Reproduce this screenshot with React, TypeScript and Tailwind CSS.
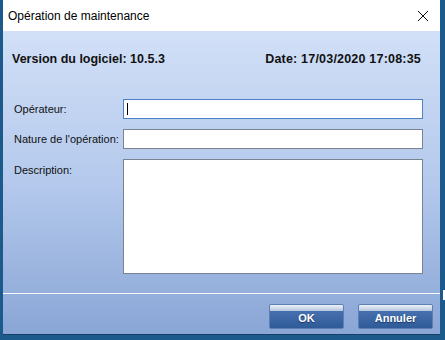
export default function App() {
  return (
    <div className="relative h-[340px] w-[445px] overflow-hidden bg-[#1d5a8c] font-['Liberation_Sans',Arial,sans-serif]">
      <div className="ml-[3px] flex h-[334px] w-[437px] flex-col shadow-[0_1px_0_#163f66]">
        {/* title bar */}
        <div className="flex h-[31px] shrink-0 items-center justify-between bg-white pl-[5px] pr-[9px]">
          <span className="text-[12px] text-black">Opération de maintenance</span>
          <svg width="12" height="12" viewBox="0 0 12 12" className="mr-[2px]">
            <path d="M1 1L11 11M11 1L1 11" stroke="#111" strokeWidth="1" />
          </svg>
        </div>

        <div className="flex flex-1 flex-col bg-gradient-to-b from-[#d2e0f7] via-[#b4c9ec] to-[#8aa6d6]">
          <div className="flex h-[56px] items-center justify-between pl-[9px] pr-[19px] pt-[1px] text-[12.5px] font-bold text-[#111]">
            <span>Version du logiciel: 10.5.3</span>
            <span className="tracking-[0.2px]">Date: 17/03/2020 17:08:35</span>
          </div>

          <div className="mt-[12px] flex flex-col gap-[10px] pl-[11px] pr-[17px] text-[11px] text-[#111]">
            <div className="flex h-[20px] items-center">
              <label className="w-[109px]">Opérateur:</label>
              <div className="flex h-[20px] flex-1 items-center border border-[#4b82c6] bg-white pl-[3px]">
                <span className="h-[12px] w-px bg-black" />
              </div>
            </div>
            <div className="flex h-[20px] items-center">
              <label className="w-[109px]">Nature de l'opération:</label>
              <div className="h-[20px] flex-1 border border-[#7a8391] bg-white" />
            </div>
            <div className="flex items-start">
              <label className="w-[109px] pt-[3px]">Description:</label>
              <div className="h-[115px] flex-1 border border-[#7a8391] bg-white" />
            </div>
          </div>

          <div className="mt-[19px] h-px bg-white" />

          <div className="flex justify-end gap-[14px] pr-[7px] pt-[10px]">
            {["OK", "Annuler"].map((t) => (
              <button
                key={t}
                className="flex h-[25px] w-[75px] flex-col overflow-hidden rounded-[2px] border border-[#5d7fb1] bg-gradient-to-b from-[#4f78b6] to-[#2f5a98] text-[11px] font-bold text-white [text-shadow:0_1px_1px_#1a3660]"
              >
                <span className="h-[6px] w-full shrink-0 bg-gradient-to-b from-[#eef2f8] to-[#b5c5dc]" />
                <span className="-mt-[2px] flex flex-1 items-center justify-center">{t}</span>
              </button>
            ))}
          </div>
        </div>
      </div>
      <div className="absolute left-[443px] top-[290px] h-[10px] w-[2px] bg-white" />
    </div>
  );
}
